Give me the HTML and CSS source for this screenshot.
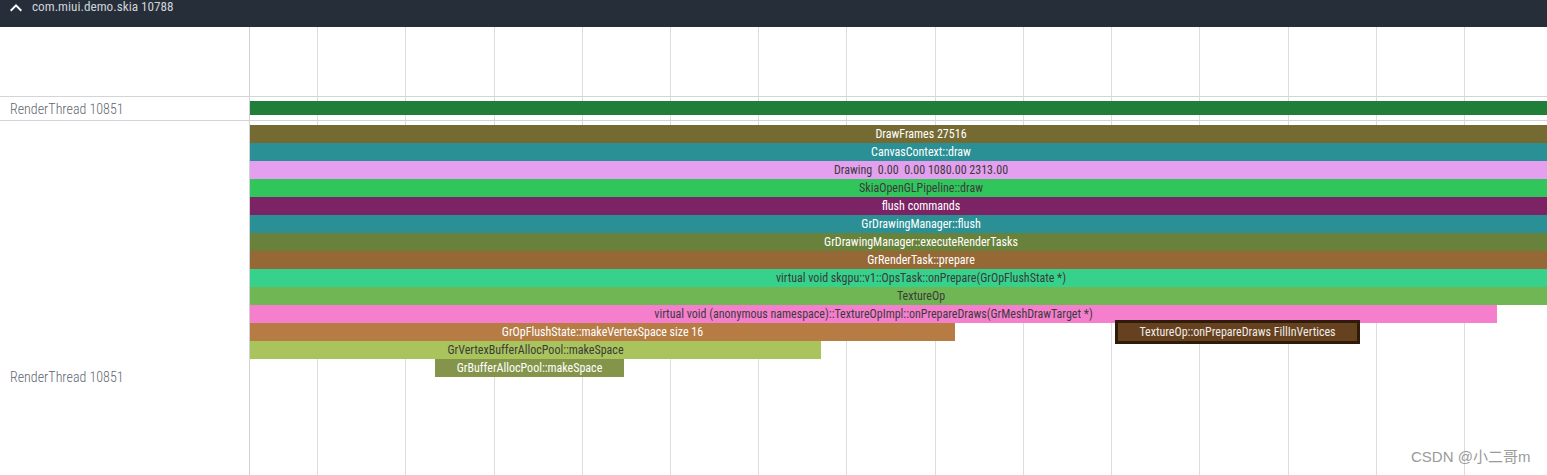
FILE: index.html
```html
<!DOCTYPE html>
<html lang="en">
<head>
<meta charset="utf-8">
<title>Trace</title>
<link rel="stylesheet" href="styles.css">
</head>
<body>
<div class="header">
  <svg class="chev" width="24" height="24" viewBox="0 0 24 24"><path d="M12 8l-6 6 1.41 1.41L12 10.83l4.59 4.58L18 14z" fill="#ffffff"/></svg>
  <span class="title">com.miui.demo.skia 10788</span>
</div>
<div class="tracks">
  <div class="grid">
    <i class="gl" style="left:67px"></i>
    <i class="gl" style="left:155px"></i>
    <i class="gl" style="left:244px"></i>
    <i class="gl" style="left:332px"></i>
    <i class="gl" style="left:420px"></i>
    <i class="gl" style="left:508px"></i>
    <i class="gl" style="left:596px"></i>
    <i class="gl" style="left:685px"></i>
    <i class="gl" style="left:773px"></i>
    <i class="gl" style="left:861px"></i>
    <i class="gl" style="left:949px"></i>
    <i class="gl" style="left:1038px"></i>
    <i class="gl" style="left:1126px"></i>
    <i class="gl" style="left:1214px"></i>
  </div>
  <div class="track track-top">
    <div class="label"></div>
    <div class="canvas"></div>
  </div>
  <div class="track track-state">
    <div class="label">RenderThread 10851</div>
    <div class="canvas"><div class="state-bar"></div></div>
  </div>
  <div class="track track-slices">
    <div class="label label-deep">RenderThread 10851</div>
    <div class="canvas slices">
      <div class="depth"><div class="slice light c1" style="left:0;width:1342px">DrawFrames 27516</div></div>
      <div class="depth"><div class="slice light c2" style="left:0;width:1342px">CanvasContext::draw</div></div>
      <div class="depth"><div class="slice dark c3" style="left:0;width:1342px">Drawing&nbsp; 0.00&nbsp; 0.00 1080.00 2313.00</div></div>
      <div class="depth"><div class="slice dark c4" style="left:0;width:1342px">SkiaOpenGLPipeline::draw</div></div>
      <div class="depth"><div class="slice light c5" style="left:0;width:1342px">flush commands</div></div>
      <div class="depth"><div class="slice light c2" style="left:0;width:1342px">GrDrawingManager::flush</div></div>
      <div class="depth"><div class="slice light c7" style="left:0;width:1342px">GrDrawingManager::executeRenderTasks</div></div>
      <div class="depth"><div class="slice light c8" style="left:0;width:1342px">GrRenderTask::prepare</div></div>
      <div class="depth"><div class="slice dark c9" style="left:0;width:1342px">virtual void skgpu::v1::OpsTask::onPrepare(GrOpFlushState *)</div></div>
      <div class="depth"><div class="slice dark c10" style="left:0;width:1342px">TextureOp</div></div>
      <div class="depth"><div class="slice dark c11" style="left:0;width:1247px">virtual void (anonymous namespace)::TextureOpImpl::onPrepareDraws(GrMeshDrawTarget *)</div></div>
      <div class="depth">
        <div class="slice light c12" style="left:0;width:705px">GrOpFlushState::makeVertexSpace size 16</div>
        <div class="slice light selected" style="left:865px;width:245px">TextureOp::onPrepareDraws FillInVertices</div>
      </div>
      <div class="depth"><div class="slice dark c13" style="left:0;width:571px">GrVertexBufferAllocPool::makeSpace</div></div>
      <div class="depth"><div class="slice light c14" style="left:185px;width:189px">GrBufferAllocPool::makeSpace</div></div>
    </div>
  </div>
  <div class="watermark">CSDN @小二哥m</div>
</div>
</body>
</html>
```
FILE: styles.css
```css
html, body {
  margin: 0;
  padding: 0;
  background: #ffffff;
}
body {
  width: 1547px;
  height: 475px;
  overflow: hidden;
  font-family: "Roboto Condensed", Roboto, "Liberation Sans", sans-serif;
  font-stretch: 87.5%;
}
.header {
  height: 27px;
  background: #262e3a;
  display: flex;
  align-items: flex-start;
  box-sizing: border-box;
}
.chev {
  display: block;
  margin: -4px 0 0 4px;
  flex: none;
}
.title {
  color: #cfd3d8;
  font-size: 13.2px;
  line-height: 16px;
  margin-left: 4px;
  margin-top: -1px;
}
.tracks {
  position: relative;
  width: 1547px;
  height: 448px;
  overflow: hidden;
}
.grid {
  position: absolute;
  left: 250px;
  top: 0;
  bottom: 0;
  right: 0;
  z-index: 0;
}
.gl {
  position: absolute;
  top: 0;
  bottom: 0;
  width: 1px;
  background: #dcdcdc;
}
.track {
  display: flex;
  position: relative;
  z-index: 1;
}
.label {
  flex: none;
  width: 250px;
  box-sizing: border-box;
  border-right: 1px solid #cfd1d4;
  background: #ffffff;
  color: #5f6670;
  font-size: 14px;
  font-weight: 300;
  font-stretch: 75%;
  padding-left: 10px;
  display: flex;
  align-items: center;
}
.label-deep {
  align-items: flex-start;
  padding-top: 247px;
  line-height: 18px;
}
.canvas {
  flex: 1;
  position: relative;
  overflow: hidden;
}
.track-top {
  height: 70px;
  border-bottom: 1px solid #d3d4d8;
  box-sizing: border-box;
}
.track-state {
  height: 24px;
  border-bottom: 1px solid #d3d4d8;
  box-sizing: border-box;
}
.state-bar {
  margin-top: 4px;
  height: 14px;
  background: #217e39;
}
.track-slices {
  height: 354px;
}
.slices {
  padding-top: 4px;
}
.depth {
  height: 18px;
  position: relative;
}
.slice {
  position: absolute;
  top: 0;
  height: 18px;
  line-height: 18px;
  font-size: 12px;
  text-align: center;
  white-space: nowrap;
  overflow: hidden;
  box-sizing: border-box;
}
.light { color: #ffffff; }
.dark { color: #3b3b3b; }
.c1 { background: #766a33; }
.c2 { background: #2a9096; }
.c3 { background: #e49fee; }
.c4 { background: #31c65b; }
.c5 { background: #7b2365; }
.c7 { background: #68823b; }
.c8 { background: #966836; }
.c9 { background: #36d18b; }
.c10 { background: #70b655; }
.c11 { background: #f57fcd; }
.c12 { background: #b67c44; }
.c13 { background: #a9c45c; }
.c14 { background: #84944a; }
.selected {
  top: -3px;
  height: 24px;
  line-height: 18px;
  background: #654120;
  border: 3px solid #2f1b09;
  color: #f0ebe6;
}
.watermark {
  position: absolute;
  left: 1411px;
  top: 421px;
  z-index: 2;
  font-family: "Liberation Sans", "Noto Sans CJK SC", sans-serif;
  font-stretch: normal;
  font-size: 15px;
  line-height: 18px;
  color: #9a9a9a;
  white-space: nowrap;
}
```
